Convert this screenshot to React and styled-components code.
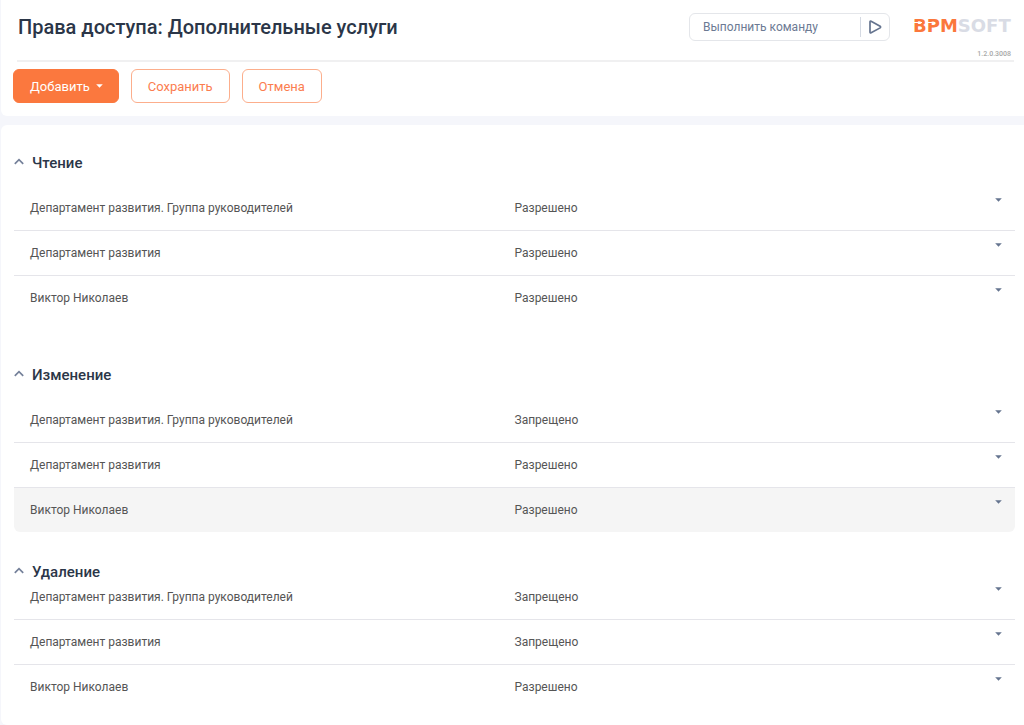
import { useState } from "react"
import styled, { createGlobalStyle, css } from "styled-components"

const GlobalStyle = createGlobalStyle`
    * {
        box-sizing: border-box;
    }
    body {
        margin: 0;
        background: #f5f6fb;
        color: #555555;
        font-family: Roboto, "Liberation Sans", sans-serif;
        font-size: 12px;
    }
    button, input {
        font-family: inherit;
    }
`

const Page = styled.div`
    min-height: 100vh;
    display: flex;
    flex-direction: column;
    gap: 9px;
    padding-left: 1px;
`

const Header = styled.header`
    background: #ffffff;
    border-radius: 0 0 0 6px;
    padding: 0 10px 13px 12px;
`

const TitleBar = styled.div`
    display: flex;
    justify-content: space-between;
    align-items: flex-start;
    height: 62px;
    padding: 13px 0 0 1px;
    margin-left: 4px;
    border-bottom: 2px solid #f0f0f1;
`

const Title = styled.h1`
    margin: 0;
    color: #2b3648;
    font-size: 20px;
    line-height: 28px;
    font-weight: 500;
`

const Tools = styled.div`
    display: flex;
    align-items: flex-start;
    gap: 23px;
`

const Command = styled.form`
    display: flex;
    align-items: center;
    width: 201px;
    height: 28px;
    border: 1px solid #e4e6ea;
    border-radius: 6px;
`

const CommandInput = styled.input`
    flex: 1;
    min-width: 0;
    height: 20px;
    padding: 0 0 0 13px;
    border: none;
    border-right: 1px solid #d5dae3;
    outline: none;
    background: transparent;
    color: #6c7a93;
    font-size: 12px;
    &::placeholder {
        color: #6c7a93;
        opacity: 1;
    }
`

const RunButton = styled.button`
    display: flex;
    justify-content: center;
    align-items: center;
    width: 28px;
    height: 26px;
    padding: 0;
    border: none;
    background: none;
    color: #65748f;
    cursor: pointer;
`

const Brand = styled.div`
    display: flex;
    flex-direction: column;
    align-items: flex-end;
    gap: 11px;
    padding-top: 2px;
`

const Version = styled.span`
    padding-right: 3px;
    color: #a8a8a8;
    font-size: 7px;
    line-height: 8px;
    font-weight: 500;
`

const Actions = styled.div`
    display: flex;
    gap: 12px;
    padding-top: 7px;
`

const Button = styled.button`
    display: flex;
    align-items: center;
    gap: 6px;
    height: 34px;
    padding: 0 ${(props) => (props.$primary ? "15px" : "16px")} 0 16px;
    border: 1px solid ${(props) => (props.$primary ? "#fb783e" : "#fcae8c")};
    border-radius: 6px;
    background: ${(props) => (props.$primary ? "#fb783e" : "#ffffff")};
    color: ${(props) => (props.$primary ? "#ffffff" : "#fb7d50")};
    font-size: 13px;
    cursor: pointer;
`

const Content = styled.main`
    flex: 1;
    background: #ffffff;
    border-radius: 6px 0 0 6px;
    padding: 30px 9px 15px 13px;
`

const Section = styled.section`
    margin-bottom: ${(props) => (props.$spacious ? "47px" : "32px")};
    &:last-child {
        margin-bottom: 0;
    }
`

const SectionTitle = styled.h2`
    margin: 0;
    font-size: 15px;
    line-height: 16px;
    font-weight: 500;
`

const Toggle = styled.button`
    display: flex;
    align-items: center;
    gap: 8px;
    height: 16px;
    padding: 0;
    border: none;
    background: none;
    color: #2b3648;
    font: inherit;
    cursor: pointer;
`

const Chevron = styled.svg`
    margin-bottom: 4px;
    color: #75819a;
    transform: ${(props) => (props.$open ? "none" : "rotate(180deg)")};
`

const Table = styled.table`
    width: 100%;
    margin-top: ${(props) => (props.$compact ? "0" : "15px")};
    border-collapse: separate;
    border-spacing: 0;
    table-layout: fixed;
    ${(props) =>
        props.$compact &&
        css`
            tr:first-child td {
                padding-top: 7px;
            }
            tr:first-child td:last-child {
                padding-top: 4px;
            }
        `}
`

const Cell = styled.td`
    padding: 12px 0;
    border-bottom: 1px solid #e5e5ea;
    line-height: 20px;
    &:first-child {
        width: 50%;
        padding-left: 16px;
    }
    &:last-child {
        width: 34px;
        padding: 9px 0 0;
        vertical-align: top;
    }
`

const Row = styled.tr`
    background: ${(props) => (props.$active ? "#f5f5f5" : "transparent")};
    &:last-child ${Cell} {
        border-bottom: none;
    }
    &:last-child ${Cell}:first-child {
        border-bottom-left-radius: 6px;
    }
    &:last-child ${Cell}:last-child {
        border-bottom-right-radius: 6px;
    }
`

const MenuButton = styled.button`
    display: flex;
    justify-content: center;
    align-items: center;
    width: 34px;
    height: 10px;
    padding: 0;
    border: none;
    background: none;
    color: #65748f;
    cursor: pointer;
`

const DEPARTMENT_HEADS = "Департамент развития. Группа руководителей"
const DEPARTMENT = "Департамент развития"
const USER = "Виктор Николаев"
const ALLOWED = "Разрешено"
const DENIED = "Запрещено"

const sections = [
    {
        title: "Чтение",
        spacious: true,
        rows: [
            { name: DEPARTMENT_HEADS, right: ALLOWED },
            { name: DEPARTMENT, right: ALLOWED },
            { name: USER, right: ALLOWED },
        ],
    },
    {
        title: "Изменение",
        rows: [
            { name: DEPARTMENT_HEADS, right: DENIED },
            { name: DEPARTMENT, right: ALLOWED },
            { name: USER, right: ALLOWED, active: true },
        ],
    },
    {
        title: "Удаление",
        compact: true,
        rows: [
            { name: DEPARTMENT_HEADS, right: DENIED },
            { name: DEPARTMENT, right: DENIED },
            { name: USER, right: ALLOWED },
        ],
    },
]

function Caret() {
    return (
        <svg width="7" height="4" viewBox="0 0 7 4" aria-hidden="true">
            <path d="M0.2 0.2h6.6L3.5 3.8z" fill="currentColor" />
        </svg>
    )
}

function Logo() {
    return (
        <svg width="101" height="24" viewBox="0 0 101 24" role="img" aria-label="BPMSoft">
            <text x="0" y="17" fontFamily="DejaVu Sans, sans-serif" fontWeight="700" fontSize="18">
                <tspan fill="#fb773c">BPM</tspan>
                <tspan fill="#d9dce5">SOFT</tspan>
            </text>
            <path d="M0 7.5h9M14 7.5h8" stroke="#ffffff" strokeWidth="1" />
        </svg>
    )
}

function RightsSection({ section }) {
    const [open, setOpen] = useState(true)
    return (
        <Section $spacious={section.spacious}>
            <SectionTitle>
                <Toggle type="button" aria-expanded={open} onClick={() => setOpen(!open)}>
                    <Chevron $open={open} width="10" height="7" viewBox="0 0 10 7" aria-hidden="true">
                        <path d="M0.8 5.8L5 1.6l4.2 4.2" fill="none" stroke="currentColor" strokeWidth="1.7" />
                    </Chevron>
                    {section.title}
                </Toggle>
            </SectionTitle>
            {open && (
                <Table $compact={section.compact} aria-label={section.title}>
                    <tbody>
                        {section.rows.map((row) => (
                            <Row key={row.name} $active={row.active}>
                                <Cell>{row.name}</Cell>
                                <Cell>{row.right}</Cell>
                                <Cell>
                                    <MenuButton type="button" aria-label={`Действия: ${row.name}`}>
                                        <Caret />
                                    </MenuButton>
                                </Cell>
                            </Row>
                        ))}
                    </tbody>
                </Table>
            )}
        </Section>
    )
}

export default function App() {
    const [command, setCommand] = useState("")
    return (
        <Page>
            <GlobalStyle />
            <Header>
                <TitleBar>
                    <Title>Права доступа: Дополнительные услуги</Title>
                    <Tools>
                        <Command onSubmit={(e) => e.preventDefault()}>
                            <CommandInput
                                aria-label="Выполнить команду"
                                placeholder="Выполнить команду"
                                value={command}
                                onChange={(e) => setCommand(e.target.value)}
                            />
                            <RunButton type="submit" aria-label="Выполнить">
                                <svg width="13" height="14" viewBox="0 0 13 14" aria-hidden="true">
                                    <path
                                        d="M1 2v10q0 1.2 1.1.7l9-4.8q1-.9 0-1.7l-9-4.9Q1 .8 1 2z"
                                        fill="none"
                                        stroke="currentColor"
                                        strokeWidth="1.7"
                                    />
                                </svg>
                            </RunButton>
                        </Command>
                        <Brand>
                            <Logo />
                            <Version>1.2.0.3008</Version>
                        </Brand>
                    </Tools>
                </TitleBar>
                <Actions>
                    <Button type="button" $primary>
                        Добавить <Caret />
                    </Button>
                    <Button type="button">Сохранить</Button>
                    <Button type="button">Отмена</Button>
                </Actions>
            </Header>
            <Content>
                {sections.map((section) => (
                    <RightsSection key={section.title} section={section} />
                ))}
            </Content>
        </Page>
    )
}
